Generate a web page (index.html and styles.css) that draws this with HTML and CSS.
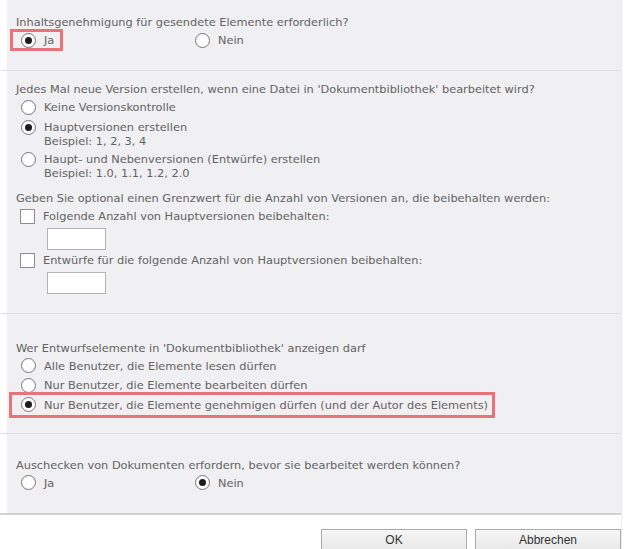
FILE: index.html
```html
<!DOCTYPE html>
<html lang="de">
<head>
<meta charset="utf-8">
<title>Versionsverwaltung</title>
<link rel="stylesheet" href="styles.css">
</head>
<body>
<div class="wrap">
  <section class="sec">
    <div class="sec-in s1">
      <div class="q">Inhaltsgenehmigung für gesendete Elemente erforderlich?</div>
      <div class="pair">
        <div class="opt hl hl-ja"><span class="radio on"></span><span>Ja</span></div>
        <div class="opt"><span class="radio"></span><span>Nein</span></div>
      </div>
    </div>
  </section>
  <section class="sec">
    <div class="sec-in s2">
      <div class="q">Jedes Mal neue Version erstellen, wenn eine Datei in 'Dokumentbibliothek' bearbeitet wird?</div>
      <div class="opt r20"><span class="radio"></span><span>Keine Versionskontrolle</span></div>
      <div class="opt r20"><span class="radio on"></span><span>Hauptversionen erstellen</span></div>
      <div class="sub">Beispiel: 1, 2, 3, 4</div>
      <div class="opt r20"><span class="radio"></span><span>Haupt- und Nebenversionen (Entwürfe) erstellen</span></div>
      <div class="sub">Beispiel: 1.0, 1.1, 1.2, 2.0</div>
      <div class="q q2">Geben Sie optional einen Grenzwert für die Anzahl von Versionen an, die beibehalten werden:</div>
      <div class="opt r20"><span class="check"></span><span>Folgende Anzahl von Hauptversionen beibehalten:</span></div>
      <div class="field"></div>
      <div class="opt r20"><span class="check"></span><span>Entwürfe für die folgende Anzahl von Hauptversionen beibehalten:</span></div>
      <div class="field"></div>
    </div>
  </section>
  <section class="sec">
    <div class="sec-in s3">
      <div class="q">Wer Entwurfselemente in 'Dokumentbibliothek' anzeigen darf</div>
      <div class="opt r19"><span class="radio"></span><span>Alle Benutzer, die Elemente lesen dürfen</span></div>
      <div class="opt r19"><span class="radio"></span><span>Nur Benutzer, die Elemente bearbeiten dürfen</span></div>
      <div class="opt r19 hl hl-wide"><span class="radio on"></span><span>Nur Benutzer, die Elemente genehmigen dürfen (und der Autor des Elements)</span></div>
    </div>
  </section>
  <section class="sec last">
    <div class="sec-in s4">
      <div class="q">Auschecken von Dokumenten erfordern, bevor sie bearbeitet werden können?</div>
      <div class="pair">
        <div class="opt"><span class="radio"></span><span>Ja</span></div>
        <div class="opt"><span class="radio on"></span><span>Nein</span></div>
      </div>
    </div>
  </section>
  <div class="buttons">
    <button class="btn" type="button">OK</button>
    <button class="btn" type="button">Abbrechen</button>
  </div>
</div>
</body>
</html>
```

FILE: styles.css
```css
html, body {
  margin: 0;
  padding: 0;
  background: #ffffff;
}

body {
  font-family: "DejaVu Sans", Verdana, sans-serif;
  font-size: 11.35px;
  color: #636363;
}

.wrap {
  width: 621px;
  border-right: 1px solid #ececec;
  min-height: 549px;
}

.sec {
  border-bottom: 1px solid #dedede;
}

.sec.last {
  border-bottom: 2px solid #d2d2d2;
}

.sec-in {
  margin-left: 7px;
  background: #f0f0f2;
  padding-left: 9px;
}

.s1 { padding-top: 15px; padding-bottom: 20px; }
.s2 { padding-top: 11px; padding-bottom: 19px; }
.s3 { padding-top: 27px; padding-bottom: 18px; }
.s4 { padding-top: 24px; padding-bottom: 20px; }

.q {
  line-height: 15px;
  white-space: nowrap;
}

.q2 {
  margin-top: 10px;
}

.pair {
  display: grid;
  grid-template-columns: 174px auto;
  align-items: center;
}

.opt {
  position: relative;
  display: flex;
  align-items: center;
  height: 20px;
  padding-left: 5px;
  justify-self: start;
  white-space: nowrap;
  width: max-content;
}

.r20 { height: 20px; }
.r19 { height: 19.5px; }

.radio {
  box-sizing: border-box;
  width: 15px;
  height: 15px;
  border: 1px solid #757575;
  border-radius: 50%;
  background: #ffffff;
  margin-right: 8px;
  display: flex;
  align-items: center;
  justify-content: center;
  flex: none;
}

.radio.on::before {
  content: "";
  width: 7px;
  height: 7px;
  border-radius: 50%;
  background: #1c1c1c;
}

.check {
  box-sizing: border-box;
  width: 15px;
  height: 15px;
  border: 1px solid #8e8e8e;
  background: #ffffff;
  margin-right: 8px;
  margin-left: -1px;
  flex: none;
}

.sub {
  line-height: 15px;
  margin-top: -3px;
  padding-left: 28px;
}

.field {
  box-sizing: border-box;
  width: 59px;
  height: 22px;
  margin-left: 31px;
  margin-top: 2px;
  border: 1px solid #b3b3b3;
  background: #ffffff;
}

.hl::after {
  content: "";
  position: absolute;
  border: 3px solid #e8737b;
  pointer-events: none;
}

.hl-ja::after {
  left: -6px;
  right: -9px;
  top: -1px;
  bottom: -1px;
}

.hl-wide::after {
  left: -7px;
  right: -7px;
  top: -3px;
  bottom: -3px;
}

.buttons {
  display: flex;
  justify-content: flex-end;
  gap: 8px;
  margin-top: 14px;
}

.btn {
  box-sizing: border-box;
  width: 146px;
  height: 22px;
  border: 1px solid #ababab;
  background: linear-gradient(#f6f6f6, #e8e8e8);
  font-family: "Liberation Sans", Tahoma, sans-serif;
  font-size: 12px;
  color: #333333;
  padding: 0;
}
```
